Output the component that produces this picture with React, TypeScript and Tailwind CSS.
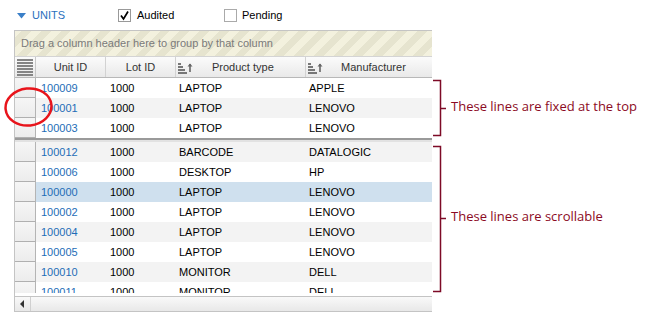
import React from "react";

const fixedRows = [
  ["100009", "1000", "LAPTOP", "APPLE"],
  ["100001", "1000", "LAPTOP", "LENOVO"],
  ["100003", "1000", "LAPTOP", "LENOVO"],
];
const scrollRows = [
  ["100012", "1000", "BARCODE", "DATALOGIC"],
  ["100006", "1000", "DESKTOP", "HP"],
  ["100000", "1000", "LAPTOP", "LENOVO"],
  ["100002", "1000", "LAPTOP", "LENOVO"],
  ["100004", "1000", "LAPTOP", "LENOVO"],
  ["100005", "1000", "LAPTOP", "LENOVO"],
  ["100010", "1000", "MONITOR", "DELL"],
  ["100011", "1000", "MONITOR", "DELL"],
];

function SortIcon() {
  return (
    <svg width="17" height="13" viewBox="0 0 17 13" className="shrink-0">
      <rect x="1" y="2" width="3" height="2" fill="#777" />
      <rect x="1" y="5" width="5" height="2" fill="#777" />
      <rect x="1" y="8" width="7" height="2" fill="#777" />
      <rect x="1" y="11" width="9" height="2" fill="#777" />
      <path d="M13 3 V11" stroke="#666" strokeWidth="1.6" />
      <path d="M10.5 5.5 L13 2.5 L15.5 5.5 Z" fill="#666" />
    </svg>
  );
}

function Row({ r, bg }: { r: string[]; bg: string }) {
  return (
    <div className="flex h-[20px] shrink-0">
      <div className="w-[21px] shrink-0 h-[20px] bg-gradient-to-b from-[#f6f6f6] to-[#ececec] border-r border-r-[#b4b4b4] border-b border-b-[#b0b0b0]" />
      <div className={`flex flex-1 items-center pt-[1px] ${bg}`}>
        <div className="w-[70px] pl-[5px] text-[#1e6db7]">{r[0]}</div>
        <div className="w-[70px] pl-[4px] text-black">{r[1]}</div>
        <div className="w-[130px] pl-[3px] text-black">{r[2]}</div>
        <div className="flex-1 pl-[3px] text-black">{r[3]}</div>
      </div>
    </div>
  );
}

export default function App() {
  return (
    <div
      className="relative w-[651px] h-[315px] bg-white overflow-hidden text-[11px] leading-none"
      style={{ fontFamily: '"Liberation Sans", Arial, sans-serif' }}
    >
      {/* top bar */}
      <div className="h-[30px] flex items-center pt-[1px]">
        <div className="flex items-center ml-[17px] w-[101px]">
          <svg width="9" height="6" viewBox="0 0 9 6" className="mr-[6px]">
            <path d="M0 0 H9 L4.5 5.5 Z" fill="#3a7fc8" />
          </svg>
          <span className="text-[#2a6fbd]">UNITS</span>
        </div>
        <div className="flex items-center w-[106px]">
          <div className="w-[13px] h-[13px] border border-[#999] bg-white flex items-center justify-center mr-[6px]">
            <svg width="11" height="11" viewBox="0 0 11 11">
              <path d="M2 5.5 L4.5 9 L9 1.5" stroke="#000" strokeWidth="1.7" fill="none" />
            </svg>
          </div>
          <span className="text-black">Audited</span>
        </div>
        <div className="flex items-center">
          <div className="w-[13px] h-[13px] border border-[#aaa] bg-white mr-[5px]" />
          <span className="text-black">Pending</span>
        </div>
      </div>

      {/* grid */}
      <div className="ml-[14px] w-[418px] h-[282px] border-l border-t border-b border-[#c4c4c4] flex flex-col">
        <div
          className="h-[26px] shrink-0 flex items-center pl-[6px] text-[#7a7a7a] border-b border-[#d4d4d4]"
          style={{
            background:
              "repeating-linear-gradient(-45deg, #f3f1de 0px, #f3f1de 7px, #e6e4cf 7px, #e6e4cf 14px)",
          }}
        >
          Drag a column header here to group by that column
        </div>
        <div className="h-[21px] shrink-0 flex bg-gradient-to-b from-[#fbfbfb] to-[#e9e9e9] border-b border-[#b8b8b8] text-[#333] text-[11px]">
          <div className="w-[21px] shrink-0 flex flex-col justify-center items-center gap-[1px] border-r border-[#c8c8c8]">
            {[0, 1, 2, 3, 4, 5].map((i) => (
              <div key={i} className="w-[16px] h-[2px] bg-[#858585]" />
            ))}
          </div>
          <div className="w-[70px] flex items-center justify-center border-r border-[#d2d2d2]">
            Unit ID
          </div>
          <div className="w-[70px] flex items-center justify-center border-r border-[#d2d2d2]">
            Lot ID
          </div>
          <div className="w-[130px] flex items-center border-r border-[#d2d2d2]">
            <div className="pl-[1px]">
              <SortIcon />
            </div>
            <span className="ml-[18px]">Product type</span>
          </div>
          <div className="flex-1 flex items-center">
            <div className="pl-[1px]">
              <SortIcon />
            </div>
            <span className="ml-[17px]">Manufacturer</span>
          </div>
        </div>
        {fixedRows.map((r, i) => (
          <Row key={r[0]} r={r} bg={i === 1 ? "bg-[#f3f3f3]" : "bg-white"} />
        ))}
        <div className="h-[4px] shrink-0 flex flex-col">
          <div className="h-[2px] bg-[#9a9a9a]" />
          <div className="h-[2px] bg-[#e2e2e2]" />
        </div>
        <div className="flex-1 overflow-hidden flex flex-col">
          {scrollRows.map((r, i) => (
            <Row
              key={r[0]}
              r={r}
              bg={i === 2 ? "bg-[#cfe0ee]" : i % 2 === 0 ? "bg-[#f3f3f3]" : "bg-white"}
            />
          ))}
        </div>
        <div className="h-[3px] shrink-0 bg-white" />
        <div className="h-[15px] shrink-0 flex border-t border-[#c4c4c4] bg-gradient-to-b from-[#f9f9f9] to-[#e8e8e8]">
          <div className="w-[16px] flex items-center justify-center border-r border-[#d0d0d0]">
            <svg width="5" height="8" viewBox="0 0 5 8">
              <path d="M4 0 V8 L0 4 Z" fill="#333" />
            </svg>
          </div>
        </div>
      </div>

      {/* red ellipse */}
      <svg className="absolute left-[3px] top-[87px]" width="52" height="42" viewBox="0 0 52 42">
        <ellipse cx="25.5" cy="20" rx="23" ry="18.5" fill="none" stroke="#e8141b" strokeWidth="2.5" transform="rotate(-6 25.5 20)" />
      </svg>

      {/* brackets */}
      <svg className="absolute left-0 top-0" width="651" height="315" viewBox="0 0 651 315">
        <g stroke="#7d0a26" strokeWidth="1.5" fill="none">
          <path d="M433 80.5 H440.5 V135.5 H433" />
          <path d="M440.5 108.5 H446" />
          <path d="M433 146.5 H440.5 V291.5 H433" />
          <path d="M440.5 218.5 H446" />
        </g>
      </svg>
      <div
        className="absolute left-[451px] top-[100px] text-[13px] text-[#8c0a24] leading-none"
        style={{ fontFamily: '"Open Sans", sans-serif' }}
      >
        These lines are fixed at the top
      </div>
      <div
        className="absolute left-[451px] top-[210px] text-[13px] text-[#8c0a24] leading-none"
        style={{ fontFamily: '"Open Sans", sans-serif' }}
      >
        These lines are scrollable
      </div>
    </div>
  );
}
